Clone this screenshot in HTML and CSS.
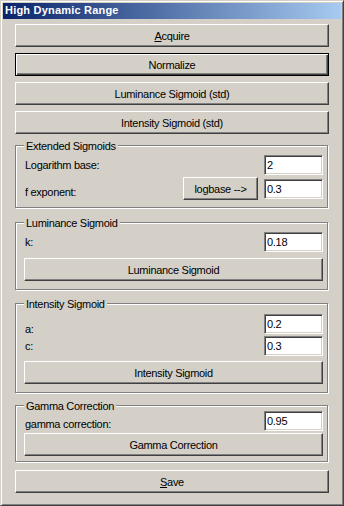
FILE: index.html
```html
<html>

<head>
  <title>High Dynamic Range</title>
  <link rel="stylesheet" href="styles.css">
</head>

<body>
  <div class="window">
    <div class="titlebar">High Dynamic Range</div>
    <div class="content">
      <button class="btn"><u>A</u>cquire</button>
      <button class="btn btn-default">Normalize</button>
      <button class="btn">Luminance Sigmoid (std)</button>
      <button class="btn">Intensity Sigmoid (std)</button>

      <div class="group group-ext">
        <div class="group-title">Extended Sigmoids</div>
        <div class="group-body">
          <div class="row">
            <span class="lbl">Logarithm base:</span>
            <input class="field" value="2">
          </div>
          <div class="row row-tall">
            <span class="lbl lbl-low">f exponent:</span>
            <button class="btn btn-small">logbase --&gt;</button>
            <input class="field" value="0.3">
          </div>
        </div>
      </div>

      <div class="group group-lum">
        <div class="group-title">Luminance Sigmoid</div>
        <div class="group-body">
          <div class="row">
            <span class="lbl">k:</span>
            <input class="field" value="0.18">
          </div>
          <button class="btn group-btn">Luminance Sigmoid</button>
        </div>
      </div>

      <div class="group group-int">
        <div class="group-title">Intensity Sigmoid</div>
        <div class="group-body">
          <div class="row">
            <span class="lbl lbl-lower">a:</span>
            <input class="field" value="0.2">
          </div>
          <div class="row">
            <span class="lbl">c:</span>
            <input class="field" value="0.3">
          </div>
          <button class="btn group-btn">Intensity Sigmoid</button>
        </div>
      </div>

      <div class="group group-gamma">
        <div class="group-title">Gamma Correction</div>
        <div class="group-body">
          <div class="row">
            <span class="lbl lbl-low">gamma correction:</span>
            <input class="field" value="0.95">
          </div>
          <button class="btn group-btn">Gamma Correction</button>
        </div>
      </div>

      <button class="btn btn-save"><u>S</u>ave</button>
    </div>
  </div>
</body>

</html>
```

FILE: styles.css
```css
body {
  margin: 0;
  font-family: 'Liberation Sans', Arial, sans-serif;
  font-size: 11px;
  letter-spacing: -0.3px;
  color: #000;
}

.window {
  box-sizing: border-box;
  width: 344px;
  height: 506px;
  padding: 2px;
  background: #d4d0c8;
  border: 1px solid;
  border-color: #d4d0c8 #404040 #404040 #d4d0c8;
  box-shadow: inset 1px 1px #fff, inset -1px -1px #808080;
}

.titlebar {
  height: 16px;
  line-height: 15px;
  padding-left: 2px;
  color: #fff;
  font-weight: bold;
  letter-spacing: 0.2px;
  background: linear-gradient(to right, #0a246a, #a6caf0);
}

.content {
  display: flex;
  flex-direction: column;
  padding: 5px 12px 0;
}

/* buttons */
.btn {
  box-sizing: border-box;
  height: 23px;
  padding: 0;
  font: inherit;
  letter-spacing: inherit;
  color: #000;
  background: #d4d0c8;
  border: 1px solid;
  border-color: #fff #404040 #404040 #fff;
  box-shadow: inset -1px -1px #808080;
}

.content>.btn+.btn {
  margin-top: 6px;
}

.btn-default {
  border-color: #000;
  box-shadow: inset 1px 1px #fff, inset -1px -1px #404040, inset -2px -2px #808080;
}

.btn-small {
  width: 75px;
  margin-right: 6px;
}

.btn-save {
  margin-top: 8px;
}

/* group boxes */
.group {
  margin-right: 1px;
  border: 1px solid #808080;
  box-shadow: inset 1px 1px #fff, 1px 1px #fff;
}

.group-ext {
  margin-top: 11px;
}

.group-lum {
  margin-top: 14px;
}

.group-int {
  margin-top: 13px;
}

.group-gamma {
  margin-top: 12px;
}

.group-title {
  align-self: flex-start;
  width: max-content;
  height: 13px;
  line-height: 13px;
  margin: -6px 0 -7px 8px;
  padding: 0 2px;
  background: #d4d0c8;
}

.group-body {
  display: flex;
  flex-direction: column;
  padding: 9px 4px 8px 8px;
}

.group-ext .group-body {
  padding-bottom: 7px;
}

.group-int .group-body {
  padding-top: 10px;
}

.group-gamma .group-body {
  padding-top: 5px;
  padding-bottom: 5px;
}

.group-btn {
  margin-top: 6px;
}

.group-int .group-btn {
  margin-top: 5px;
}

.group-gamma .group-btn {
  margin-top: 2px;
}

/* label + field rows */
.row {
  display: flex;
  align-items: center;
  height: 20px;
}

.row+.row {
  margin-top: 2px;
}

.row-tall {
  height: 23px;
}

.lbl {
  flex: 1;
  padding-left: 1px;
}

.lbl-low {
  padding-top: 6px;
}

.lbl-lower {
  padding-top: 10px;
}

.field {
  box-sizing: border-box;
  width: 59px;
  height: 20px;
  padding: 0 2px;
  font: inherit;
  letter-spacing: inherit;
  color: #000;
  background: #fff;
  border: 1px solid;
  border-color: #808080 #fff #fff #808080;
  box-shadow: inset 1px 1px #404040, inset -1px -1px #d4d0c8;
  outline: none;
}
```
